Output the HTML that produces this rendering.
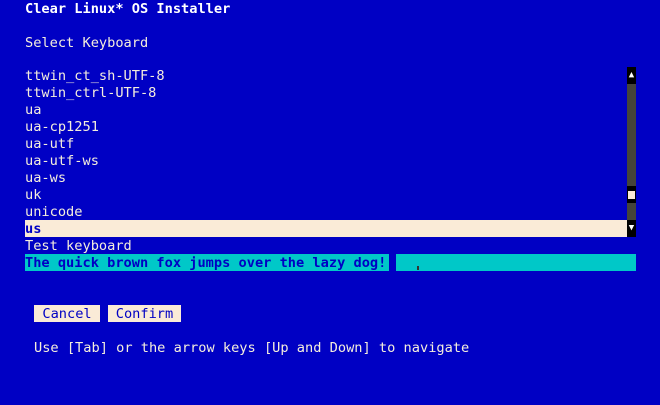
<!DOCTYPE html><html><head><style>
body{margin:0;width:660px;height:405px;background:#0000c4;overflow:hidden;font-family:"DejaVu Sans Mono","Liberation Mono",monospace;font-size:13.65px;color:#f5eedc;position:relative}
.r{position:absolute;left:25px;height:17px;line-height:19px;white-space:pre}
.b{font-weight:bold}
</style></head><body>
<div class="r b" style="top:0;color:#fff">Clear Linux* OS Installer</div>
<div class="r" style="top:34px">Select Keyboard</div>
<div class="r" style="top:67px">ttwin_ct_sh-UTF-8</div>
<div class="r" style="top:84px">ttwin_ctrl-UTF-8</div>
<div class="r" style="top:101px">ua</div>
<div class="r" style="top:118px">ua-cp1251</div>
<div class="r" style="top:135px">ua-utf</div>
<div class="r" style="top:152px">ua-utf-ws</div>
<div class="r" style="top:169px">ua-ws</div>
<div class="r" style="top:186px">uk</div>
<div class="r" style="top:203px">unicode</div>
<div class="r b" style="top:220px;width:602px;background:#faebd7;color:#0000c4">us</div>
<div class="r" style="top:237px">Test keyboard</div>
<div class="r" style="top:254px;width:611px;background:#00c8c8;color:#0000c4;font-weight:600">The quick brown fox jumps over the lazy dog!</div>
<div style="position:absolute;left:389px;top:254px;width:7px;height:17px;background:#0000c4"></div>
<div style="position:absolute;left:417px;top:266px;width:2px;height:4px;background:#333"></div>
<div style="position:absolute;left:627px;top:67px;width:9px;height:170px;background:#45443a"></div>
<div style="position:absolute;left:627px;top:67px;width:9px;height:17px;background:#000;color:#fff;font-size:9px;line-height:17px;text-align:center">▲</div>
<div style="position:absolute;left:627px;top:220px;width:9px;height:17px;background:#000;color:#fff;font-size:9px;line-height:17px;text-align:center">▼</div>
<div style="position:absolute;left:627px;top:186px;width:9px;height:17px;background:#000"></div>
<div style="position:absolute;left:628px;top:191px;width:7px;height:8px;background:#faebd7"></div>
<div class="r" style="top:305px;left:34px;width:66px;background:#faebd7;color:#0000c4;text-align:center">Cancel</div>
<div class="r" style="top:305px;left:108px;width:73px;background:#faebd7;color:#0000c4;text-align:center">Confirm</div>
<div class="r" style="top:339px;left:34px">Use [Tab] or the arrow keys [Up and Down] to navigate</div>
</body></html>
